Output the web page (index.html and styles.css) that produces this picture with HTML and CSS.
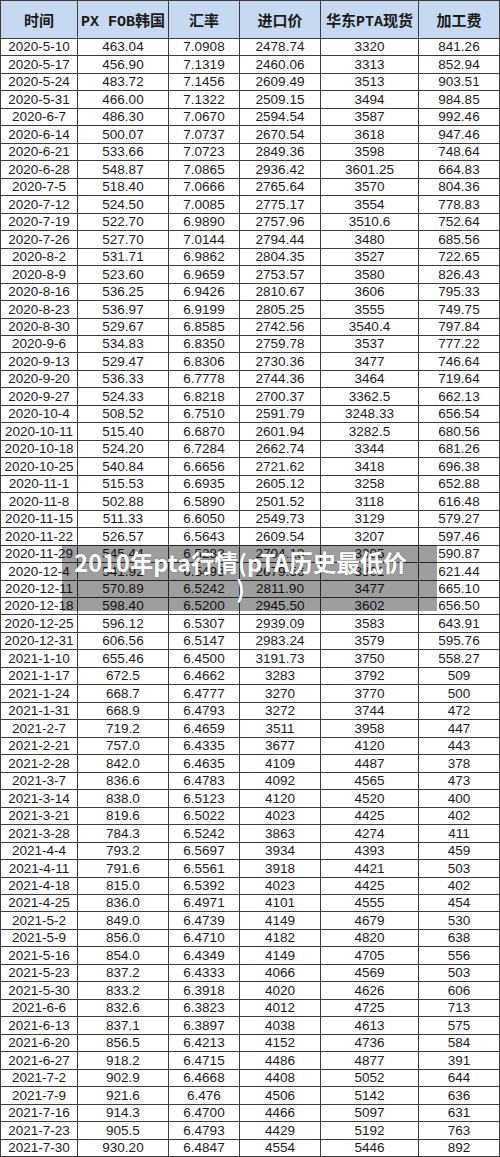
FILE: index.html
```html
<!DOCTYPE html>
<html lang="zh">
<head>
<meta charset="utf-8">
<title>2010年pta行情</title>
<link rel="stylesheet" href="styles.css">
</head>
<body>
<div class="page">
<div class="sheet">
<div class="h">时间</div><div class="h">PX FOB韩国</div><div class="h">汇率</div><div class="h">进口价</div><div class="h">华东PTA现货</div><div class="h">加工费</div>
<div class="c">2020-5-10</div><div class="c">463.04</div><div class="c">7.0908</div><div class="c">2478.74</div><div class="c">3320</div><div class="c">841.26</div>
<div class="c">2020-5-17</div><div class="c">456.90</div><div class="c">7.1319</div><div class="c">2460.06</div><div class="c">3313</div><div class="c">852.94</div>
<div class="c">2020-5-24</div><div class="c">483.72</div><div class="c">7.1456</div><div class="c">2609.49</div><div class="c">3513</div><div class="c">903.51</div>
<div class="c">2020-5-31</div><div class="c">466.00</div><div class="c">7.1322</div><div class="c">2509.15</div><div class="c">3494</div><div class="c">984.85</div>
<div class="c">2020-6-7</div><div class="c">486.30</div><div class="c">7.0670</div><div class="c">2594.54</div><div class="c">3587</div><div class="c">992.46</div>
<div class="c">2020-6-14</div><div class="c">500.07</div><div class="c">7.0737</div><div class="c">2670.54</div><div class="c">3618</div><div class="c">947.46</div>
<div class="c">2020-6-21</div><div class="c">533.66</div><div class="c">7.0723</div><div class="c">2849.36</div><div class="c">3598</div><div class="c">748.64</div>
<div class="c">2020-6-28</div><div class="c">548.87</div><div class="c">7.0865</div><div class="c">2936.42</div><div class="c">3601.25</div><div class="c">664.83</div>
<div class="c">2020-7-5</div><div class="c">518.40</div><div class="c">7.0666</div><div class="c">2765.64</div><div class="c">3570</div><div class="c">804.36</div>
<div class="c">2020-7-12</div><div class="c">524.50</div><div class="c">7.0085</div><div class="c">2775.17</div><div class="c">3554</div><div class="c">778.83</div>
<div class="c">2020-7-19</div><div class="c">522.70</div><div class="c">6.9890</div><div class="c">2757.96</div><div class="c">3510.6</div><div class="c">752.64</div>
<div class="c">2020-7-26</div><div class="c">527.70</div><div class="c">7.0144</div><div class="c">2794.44</div><div class="c">3480</div><div class="c">685.56</div>
<div class="c">2020-8-2</div><div class="c">531.71</div><div class="c">6.9862</div><div class="c">2804.35</div><div class="c">3527</div><div class="c">722.65</div>
<div class="c">2020-8-9</div><div class="c">523.60</div><div class="c">6.9659</div><div class="c">2753.57</div><div class="c">3580</div><div class="c">826.43</div>
<div class="c">2020-8-16</div><div class="c">536.25</div><div class="c">6.9426</div><div class="c">2810.67</div><div class="c">3606</div><div class="c">795.33</div>
<div class="c">2020-8-23</div><div class="c">536.97</div><div class="c">6.9199</div><div class="c">2805.25</div><div class="c">3555</div><div class="c">749.75</div>
<div class="c">2020-8-30</div><div class="c">529.67</div><div class="c">6.8585</div><div class="c">2742.56</div><div class="c">3540.4</div><div class="c">797.84</div>
<div class="c">2020-9-6</div><div class="c">534.83</div><div class="c">6.8350</div><div class="c">2759.78</div><div class="c">3537</div><div class="c">777.22</div>
<div class="c">2020-9-13</div><div class="c">529.47</div><div class="c">6.8306</div><div class="c">2730.36</div><div class="c">3477</div><div class="c">746.64</div>
<div class="c">2020-9-20</div><div class="c">536.33</div><div class="c">6.7778</div><div class="c">2744.36</div><div class="c">3464</div><div class="c">719.64</div>
<div class="c">2020-9-27</div><div class="c">524.33</div><div class="c">6.8218</div><div class="c">2700.37</div><div class="c">3362.5</div><div class="c">662.13</div>
<div class="c">2020-10-4</div><div class="c">508.52</div><div class="c">6.7510</div><div class="c">2591.79</div><div class="c">3248.33</div><div class="c">656.54</div>
<div class="c">2020-10-11</div><div class="c">515.40</div><div class="c">6.6870</div><div class="c">2601.94</div><div class="c">3282.5</div><div class="c">680.56</div>
<div class="c">2020-10-18</div><div class="c">524.20</div><div class="c">6.7284</div><div class="c">2662.74</div><div class="c">3344</div><div class="c">681.26</div>
<div class="c">2020-10-25</div><div class="c">540.84</div><div class="c">6.6656</div><div class="c">2721.62</div><div class="c">3418</div><div class="c">696.38</div>
<div class="c">2020-11-1</div><div class="c">515.53</div><div class="c">6.6935</div><div class="c">2605.12</div><div class="c">3258</div><div class="c">652.88</div>
<div class="c">2020-11-8</div><div class="c">502.88</div><div class="c">6.5890</div><div class="c">2501.52</div><div class="c">3118</div><div class="c">616.48</div>
<div class="c">2020-11-15</div><div class="c">511.33</div><div class="c">6.6050</div><div class="c">2549.73</div><div class="c">3129</div><div class="c">579.27</div>
<div class="c">2020-11-22</div><div class="c">526.57</div><div class="c">6.5643</div><div class="c">2609.54</div><div class="c">3207</div><div class="c">597.46</div>
<div class="c">2020-11-29</div><div class="c">545.44</div><div class="c">6.5283</div><div class="c">2704.13</div><div class="c">3305</div><div class="c">590.87</div>
<div class="c">2020-12-4</div><div class="c">541.92</div><div class="c">6.5493</div><div class="c">2679.56</div><div class="c">3301</div><div class="c">621.44</div>
<div class="c">2020-12-11</div><div class="c">570.89</div><div class="c">6.5242</div><div class="c">2811.90</div><div class="c">3477</div><div class="c">665.10</div>
<div class="c">2020-12-18</div><div class="c">598.40</div><div class="c">6.5200</div><div class="c">2945.50</div><div class="c">3602</div><div class="c">656.50</div>
<div class="c">2020-12-25</div><div class="c">596.12</div><div class="c">6.5307</div><div class="c">2939.09</div><div class="c">3583</div><div class="c">643.91</div>
<div class="c">2020-12-31</div><div class="c">606.56</div><div class="c">6.5147</div><div class="c">2983.24</div><div class="c">3579</div><div class="c">595.76</div>
<div class="c">2021-1-10</div><div class="c">655.46</div><div class="c">6.4500</div><div class="c">3191.73</div><div class="c">3750</div><div class="c">558.27</div>
<div class="c">2021-1-17</div><div class="c">672.5</div><div class="c">6.4662</div><div class="c">3283</div><div class="c">3792</div><div class="c">509</div>
<div class="c">2021-1-24</div><div class="c">668.7</div><div class="c">6.4777</div><div class="c">3270</div><div class="c">3770</div><div class="c">500</div>
<div class="c">2021-1-31</div><div class="c">668.9</div><div class="c">6.4793</div><div class="c">3272</div><div class="c">3744</div><div class="c">472</div>
<div class="c">2021-2-7</div><div class="c">719.2</div><div class="c">6.4659</div><div class="c">3511</div><div class="c">3958</div><div class="c">447</div>
<div class="c">2021-2-21</div><div class="c">757.0</div><div class="c">6.4335</div><div class="c">3677</div><div class="c">4120</div><div class="c">443</div>
<div class="c">2021-2-28</div><div class="c">842.0</div><div class="c">6.4635</div><div class="c">4109</div><div class="c">4487</div><div class="c">378</div>
<div class="c">2021-3-7</div><div class="c">836.6</div><div class="c">6.4783</div><div class="c">4092</div><div class="c">4565</div><div class="c">473</div>
<div class="c">2021-3-14</div><div class="c">838.0</div><div class="c">6.5123</div><div class="c">4120</div><div class="c">4520</div><div class="c">400</div>
<div class="c">2021-3-21</div><div class="c">819.6</div><div class="c">6.5022</div><div class="c">4023</div><div class="c">4425</div><div class="c">402</div>
<div class="c">2021-3-28</div><div class="c">784.3</div><div class="c">6.5242</div><div class="c">3863</div><div class="c">4274</div><div class="c">411</div>
<div class="c">2021-4-4</div><div class="c">793.2</div><div class="c">6.5697</div><div class="c">3934</div><div class="c">4393</div><div class="c">459</div>
<div class="c">2021-4-11</div><div class="c">791.6</div><div class="c">6.5561</div><div class="c">3918</div><div class="c">4421</div><div class="c">503</div>
<div class="c">2021-4-18</div><div class="c">815.0</div><div class="c">6.5392</div><div class="c">4023</div><div class="c">4425</div><div class="c">402</div>
<div class="c">2021-4-25</div><div class="c">836.0</div><div class="c">6.4971</div><div class="c">4101</div><div class="c">4555</div><div class="c">454</div>
<div class="c">2021-5-2</div><div class="c">849.0</div><div class="c">6.4739</div><div class="c">4149</div><div class="c">4679</div><div class="c">530</div>
<div class="c">2021-5-9</div><div class="c">856.0</div><div class="c">6.4710</div><div class="c">4182</div><div class="c">4820</div><div class="c">638</div>
<div class="c">2021-5-16</div><div class="c">854.0</div><div class="c">6.4349</div><div class="c">4149</div><div class="c">4705</div><div class="c">556</div>
<div class="c">2021-5-23</div><div class="c">837.2</div><div class="c">6.4333</div><div class="c">4066</div><div class="c">4569</div><div class="c">503</div>
<div class="c">2021-5-30</div><div class="c">833.2</div><div class="c">6.3918</div><div class="c">4020</div><div class="c">4626</div><div class="c">606</div>
<div class="c">2021-6-6</div><div class="c">832.6</div><div class="c">6.3823</div><div class="c">4012</div><div class="c">4725</div><div class="c">713</div>
<div class="c">2021-6-13</div><div class="c">837.1</div><div class="c">6.3897</div><div class="c">4038</div><div class="c">4613</div><div class="c">575</div>
<div class="c">2021-6-20</div><div class="c">856.5</div><div class="c">6.4213</div><div class="c">4152</div><div class="c">4736</div><div class="c">584</div>
<div class="c">2021-6-27</div><div class="c">918.2</div><div class="c">6.4715</div><div class="c">4486</div><div class="c">4877</div><div class="c">391</div>
<div class="c">2021-7-2</div><div class="c">902.9</div><div class="c">6.4668</div><div class="c">4408</div><div class="c">5052</div><div class="c">644</div>
<div class="c">2021-7-9</div><div class="c">921.6</div><div class="c">6.476</div><div class="c">4506</div><div class="c">5142</div><div class="c">636</div>
<div class="c">2021-7-16</div><div class="c">914.3</div><div class="c">6.4700</div><div class="c">4466</div><div class="c">5097</div><div class="c">631</div>
<div class="c">2021-7-23</div><div class="c">905.5</div><div class="c">6.4793</div><div class="c">4429</div><div class="c">5192</div><div class="c">763</div>
<div class="c">2021-7-30</div><div class="c">930.20</div><div class="c">6.4847</div><div class="c">4554</div><div class="c">5446</div><div class="c">892</div>
</div>
<div class="caption">2010年pta行情(pTA历史最低价<br>)</div>
</div>
</body>
</html>
```

FILE: styles.css
```css
html, body {
  margin: 0;
  padding: 0;
  background: #ffffff;
}

.page {
  position: relative;
  width: 500px;
  height: 1157px;
  overflow: hidden;
}

.sheet {
  display: grid;
  grid-template-columns: 76px 90px 70px 80px 97px 80px;
  grid-template-rows: 37px repeat(64, 1fr);
  gap: 1px;
  padding: 1px;
  width: 500px;
  height: 1157px;
  box-sizing: border-box;
  background: #3c3c3c;
}

.h {
  background: #c6d9f0;
  display: flex;
  align-items: center;
  justify-content: center;
  font-family: "Liberation Mono", "Noto Sans CJK SC", monospace;
  font-weight: bold;
  font-size: 15px;
  color: #1a1a1a;
  white-space: nowrap;
}

.c {
  background: #ffffff;
  display: flex;
  align-items: center;
  justify-content: center;
  font-family: "Liberation Sans", Arial, sans-serif;
  font-size: 13.5px;
  color: #1c1c1c;
  white-space: nowrap;
  line-height: 1;
}

.caption {
  position: absolute;
  left: 62px;
  top: 545px;
  width: 375px;
  height: 66px;
  box-sizing: border-box;
  padding: 4px 28px 0 10px;
  background: rgba(0, 0, 0, 0.38);
  color: #ffffff;
  font-family: "Noto Sans CJK SC", "Noto Sans", sans-serif;
  font-weight: bold;
  font-size: 23.5px;
  line-height: 26px;
  text-align: center;
  white-space: nowrap;
  text-shadow: 0 0 2px rgba(0, 0, 0, 0.25);
}
```
